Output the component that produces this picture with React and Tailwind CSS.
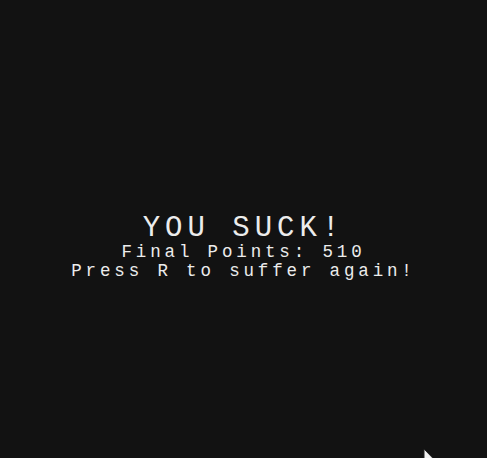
import React from 'react';

export default function App() {
  const mono = { fontFamily: '"Liberation Mono", "DejaVu Sans Mono", monospace' };
  return (
    <div className="relative h-[458px] w-full overflow-hidden bg-[#121212] text-[#ececec]" style={mono}>
      <div className="flex flex-col items-center pt-[215px]">
        <h1 className="text-[29px] leading-[28px] tracking-[5px]">YOU SUCK!</h1>
        <p className="text-[17.5px] leading-[19px] tracking-[3.85px] whitespace-pre">Final Points: 510</p>
        <p className="text-[17.5px] leading-[19px] tracking-[3.85px] whitespace-pre">Press R to suffer again!</p>
      </div>

      {/* mouse pointer */}
      <svg className="absolute left-[423px] top-[448px]" width="14" height="20" viewBox="0 0 14 20">
        <path d="M1 1 L1 16 L4.5 12.5 L7 18 L9 17 L6.8 11.8 L11.5 11.8 Z" fill="#f2f2f2" stroke="#222" strokeWidth="1" />
      </svg>
    </div>
  );
}
